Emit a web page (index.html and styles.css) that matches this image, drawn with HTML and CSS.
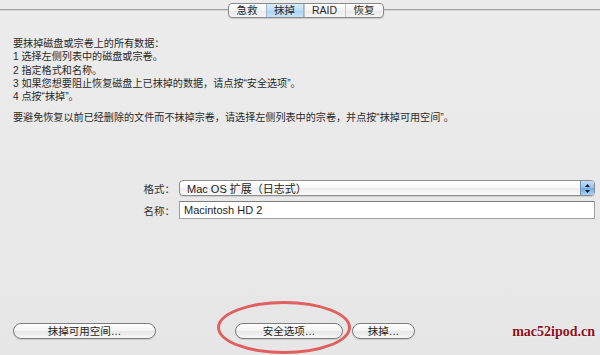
FILE: index.html
```html
<!doctype html>
<html>

<head>
	<meta charset='utf-8'>
	<title>磁盘工具 - 抹掉</title>

	<link rel="stylesheet" href="styles.css">
</head>

<body>
	<div class="page">
		<div class="tabbar">
			<div class="seg">
				<div class="tab t1">急救</div>
				<div class="tab t2 on">抹掉</div>
				<div class="tab t3">RAID</div>
				<div class="tab t4">恢复</div>
			</div>
		</div>

		<div class="info">
			<p>要抹掉磁盘或宗卷上的所有数据：<br>
				1 选择左侧列表中的磁盘或宗卷。<br>
				2 指定格式和名称。<br>
				3 如果您想要阻止恢复磁盘上已抹掉的数据，请点按“安全选项”。<br>
				4 点按“抹掉”。</p>
			<p>要避免恢复以前已经删除的文件而不抹掉宗卷，请选择左侧列表中的宗卷，并点按“抹掉可用空间”。</p>
		</div>

		<div class="form">
			<label>格式：</label>
			<div class="popup">
				<span>Mac OS 扩展（日志式）</span>
				<div class="stepper">
					<svg width="7" height="11" viewBox="0 0 7 11">
						<path d="M3.5 1 L6 4 L1 4 Z M3.5 10 L6 7 L1 7 Z" fill="#1a1a1a" />
					</svg>
				</div>
			</div>
			<label>名称：</label>
			<div class="field">Macintosh HD 2</div>
		</div>

		<div class="buttons">
			<div class="btn b1">抹掉可用空间…</div>
			<div class="btn b2">安全选项…</div>
			<div class="btn b3">抹掉…</div>
		</div>

		<div class="ring"></div>
		<div class="mark">mac52ipod.cn</div>
	</div>
</body>

</html>
```

FILE: styles.css
```css
* {
	box-sizing: border-box;
}

body {
	margin: 0;
	background: #e8e8e8;
	font-family: "Liberation Sans", "Noto Sans CJK SC", sans-serif;
	color: #1e1e1e;
}

.page {
	position: relative;
	width: 600px;
	height: 355px;
	overflow: hidden;
	background: linear-gradient(#ececec, #e6e6e6);
}

.tabbar {
	height: 18px;
	padding-top: 3px;
	padding-left: 11px;
	display: flex;
	justify-content: center;
	background:
		linear-gradient(#a2a2a2, #a2a2a2) 0 9px / 100% 1px no-repeat,
		linear-gradient(#d6d6d6, #d6d6d6) 0 10px / 100% 1px no-repeat;
}

.seg {
	display: flex;
	height: 15px;
	border: 1px solid #8a8a8a;
	border-radius: 4px;
	background: linear-gradient(#ffffff, #f3f3f3 50%, #e9e9e9 51%, #f6f6f6);
	box-shadow: 0 1px 1px rgba(0, 0, 0, 0.15);
	overflow: hidden;
}

.tab {
	font-size: 10.5px;
	line-height: 13px;
	text-align: center;
	color: #2a2a2a;
	border-left: 1px solid #c4c4c4;
}

.t1 {
	width: 37px;
	border-left: none;
}

.t2 {
	width: 38px;
}

.t3 {
	width: 41px;
}

.t4 {
	width: 38px;
}

.tab.on {
	background: linear-gradient(#d9ecfb, #bcdcf6 50%, #a9d1f3 51%, #c9e4fa);
	border-left-color: #9bb7cf;
	border-right: 1px solid #9bb7cf;
}

.info {
	margin-top: 19px;
	padding: 0 13px;
	font-size: 10.1px;
	line-height: 13.3px;
	color: #2a2a2a;
}

.info p {
	margin: 0 0 7.5px;
}

.form {
	margin-top: 56px;
	display: grid;
	grid-template-columns: 175px 416px;
	column-gap: 4px;
	row-gap: 5px;
}

.form label {
	font-size: 10.5px;
	text-align: right;
	color: #333;
	align-self: center;
}

.popup {
	height: 16px;
	display: flex;
	align-items: center;
	justify-content: space-between;
	border: 1px solid #8d8d8d;
	border-radius: 4px;
	background: linear-gradient(#ffffff, #f6f6f6 50%, #ececec 51%, #fafafa);
	box-shadow: 0 1px 1px rgba(0, 0, 0, 0.12);
	padding-left: 7px;
	font-size: 11px;
	overflow: hidden;
}

.stepper {
	width: 14px;
	height: 100%;
	display: flex;
	align-items: center;
	justify-content: center;
	background: linear-gradient(#c6e0fa, #8fc0f0 50%, #6eaae9 51%, #a8d3fb);
	border-left: 1px solid #6d93ba;
}

.field {
	height: 18px;
	border: 1px solid #a0a0a0;
	border-top-color: #7e7e7e;
	background: #ffffff;
	padding-left: 4px;
	font-size: 11px;
	line-height: 16px;
}

.buttons {
	margin-top: 104px;
	padding-left: 13px;
	display: flex;
}

.btn {
	height: 16px;
	border: 1px solid #7c7c7c;
	border-radius: 8px;
	background: linear-gradient(#ffffff, #f4f4f4 50%, #e6e6e6 51%, #f7f7f7);
	box-shadow: 0 1px 1px rgba(0, 0, 0, 0.12);
	font-size: 10.5px;
	line-height: 14px;
	text-align: center;
}

.b1 {
	width: 143px;
}

.b2 {
	width: 108px;
	margin-left: 79px;
}

.b3 {
	width: 63px;
	margin-left: 9px;
}

.ring {
	position: absolute;
	left: 217px;
	top: 301px;
	width: 134px;
	height: 53px;
	border: 3px solid rgba(222, 70, 70, 0.85);
	border-radius: 50%;
	filter: blur(0.4px);
}

.mark {
	position: absolute;
	right: 5px;
	top: 324px;
	font-family: "Liberation Serif", serif;
	font-weight: bold;
	font-size: 14px;
	line-height: 16px;
	color: #8e0f1c;
	text-shadow: 0 0 2px #fff;
}
```
